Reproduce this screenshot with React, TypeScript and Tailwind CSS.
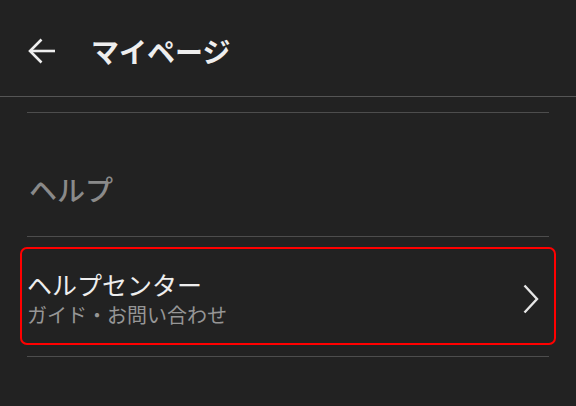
export default function App() {
  return (
    <div
      className="min-h-[406px] w-full bg-[#222222] text-[#eeeeee]"
      style={{ fontFamily: '"Noto Sans CJK JP", "Noto Sans", sans-serif' }}
    >
      <header className="flex h-[97px] items-center border-b border-[#555555] pl-[28px] pt-[5px]">
        <svg width="28" height="26" viewBox="0 0 28 26" fill="none" stroke="#eeeeee" strokeWidth="2.6">
          <path d="M27 13H3" />
          <path d="M13.5 1.5L2 13l11.5 11.5" />
        </svg>
        <h1 className="ml-[35px] text-[28px] font-bold leading-[34px]">マイページ</h1>
      </header>

      <div className="px-[20px] pt-[15px]">
        <div className="mx-[7px] h-px bg-[#4d4d4d]" />
        <div className="mx-[7px] flex h-[123px] items-center pl-[2px] pt-[28px] text-[28px] font-medium leading-[34px] text-[#8a8a8a]">
          ヘルプ
        </div>
        <div className="mx-[7px] h-px bg-[#4d4d4d]" />

        <button className="mt-[10px] flex h-[98px] w-full items-center justify-between rounded-[7px] border-2 border-[#ff0000] pl-[5px] pr-[15px] pt-[6px] text-left">
          <div className="flex flex-col">
            <span className="text-[25px] leading-[31px] text-[#eeeeee]">ヘルプセンター</span>
            <span className="text-[20px] leading-[30px] text-[#969696]">ガイド・お問い合わせ</span>
          </div>
          <svg width="16" height="30" viewBox="0 0 16 30" fill="none" stroke="#e6e6e6" strokeWidth="2.4">
            <path d="M1.5 1.5L14 15 1.5 28.5" />
          </svg>
        </button>

        <div className="mx-[7px] mt-[11px] h-px bg-[#4d4d4d]" />
      </div>
    </div>
  );
}
